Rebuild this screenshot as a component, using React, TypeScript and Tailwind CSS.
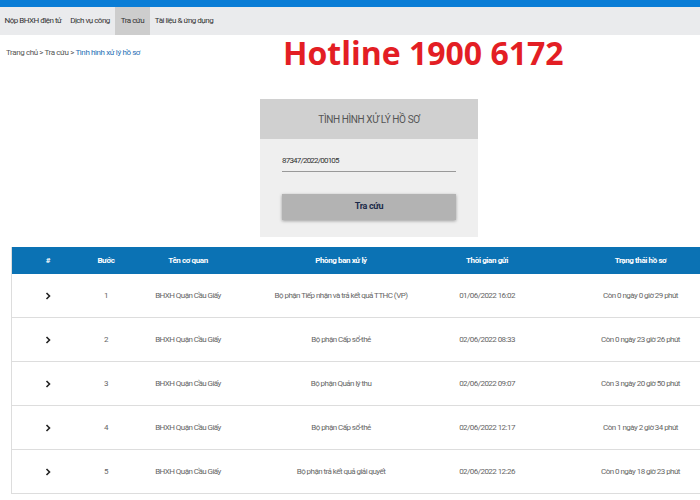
import { FC } from "react";

const rows = [
  { step: 1, dept: "Bộ phận Tiếp nhận và trả kết quả TTHC (VP)", time: "01/06/2022 16:02", status: "Còn 0 ngày 0 giờ 29 phút" },
  { step: 2, dept: "Bộ phận Cấp sổ-thẻ", time: "02/06/2022 08:33", status: "Còn 0 ngày 23 giờ 26 phút" },
  { step: 3, dept: "Bộ phận Quản lý thu", time: "02/06/2022 09:07", status: "Còn 3 ngày 20 giờ 50 phút" },
  { step: 4, dept: "Bộ phận Cấp sổ-thẻ", time: "02/06/2022 12:17", status: "Còn 1 ngày 2 giờ 34 phút" },
  { step: 5, dept: "Bộ phận trả kết quả giải quyết", time: "02/06/2022 12:26", status: "Còn 0 ngày 18 giờ 23 phút" },
];

const cols = "grid grid-cols-[72px_44px_120px_186px_106px_1fr]";

const Chevron = () => (
  <svg width="6" height="8" viewBox="0 0 6 8" className="mx-auto">
    <path d="M1.5 1 L4.5 4 L1.5 7" fill="none" stroke="#222" strokeWidth="1.6" />
  </svg>
);

const App: FC = () => {
  return (
    <div className="w-[700px] h-[500px] overflow-hidden bg-white font-['Roboto',sans-serif]">
      <div className="h-[7px] bg-[#0a7dd6]" />
      <nav className="h-[28px] bg-[#eaebed] flex items-stretch text-[8px] [letter-spacing:-0.5px] text-[#333] pl-[1px] whitespace-nowrap">
        <span className="w-[64px] flex items-center justify-center">Nộp BHXH điện tử</span>
        <span className="w-[50px] flex items-center justify-center">Dịch vụ công</span>
        <span className="w-[35px] flex items-center justify-center bg-[#cdcdcd]">Tra cứu</span>
        <span className="w-[68px] flex items-center justify-center">Tài liệu &amp; ứng dụng</span>
      </nav>

      <div className="flex items-start h-[64px]">
        <div className="text-[8px] [letter-spacing:-0.4px] text-[#555] pl-[6px] pt-[12px] w-[283px]">
          Trang chủ &gt; Tra cứu &gt; <span className="text-[#1f6fb5]">Tình hình xử lý hồ sơ</span>
        </div>
        <div className="font-['Open_Sans',sans-serif] font-bold text-[32px] leading-none text-[#e31e24] pt-[2px]">
          Hotline 1900 6172
        </div>
      </div>

      <div className="flex justify-center pl-[38px]">
        <div className="w-[218px] bg-[#efefef]">
          <div className="h-[40px] bg-[#d0d0d0] flex items-center justify-center text-[10px] [letter-spacing:-0.4px] text-[#555]">
            TÌNH HÌNH XỬ LÝ HỒ SƠ
          </div>
          <div className="px-[22px] pt-[16px] pb-[17px]">
            <div className="text-[8px] [letter-spacing:-0.8px] text-[#333] pb-[4px] border-b border-[#999]">87347/2022/00105</div>
            <button className="mt-[22px] w-full h-[26px] bg-[#b3b3b3] text-[9px] [letter-spacing:-0.3px] font-bold text-[#1c2b4a] shadow-[0_1px_3px_rgba(0,0,0,0.35)]">
              Tra cứu
            </button>
          </div>
        </div>
      </div>

      <div className="ml-[11px] mt-[10px] w-[730px] border-l border-[#ddd] text-[8px]">
        <div className={`${cols} h-[27px] items-center bg-[#0b72b4] text-white font-bold [letter-spacing:-0.4px] text-center`}>
          <span>#</span>
          <span>Bước</span>
          <span>Tên cơ quan</span>
          <span>Phòng ban xử lý</span>
          <span>Thời gian gửi</span>
          <span>Trạng thái hồ sơ</span>
        </div>
        {rows.map((r) => (
          <div key={r.step} className={`${cols} h-[44px] items-center text-center text-[#666] [letter-spacing:-0.55px] border-b border-[#ddd]`}>
            <Chevron />
            <span>{r.step}</span>
            <span>BHXH Quận Cầu Giấy</span>
            <span>{r.dept}</span>
            <span>{r.time}</span>
            <span>{r.status}</span>
          </div>
        ))}
      </div>
    </div>
  );
};

export default App;
